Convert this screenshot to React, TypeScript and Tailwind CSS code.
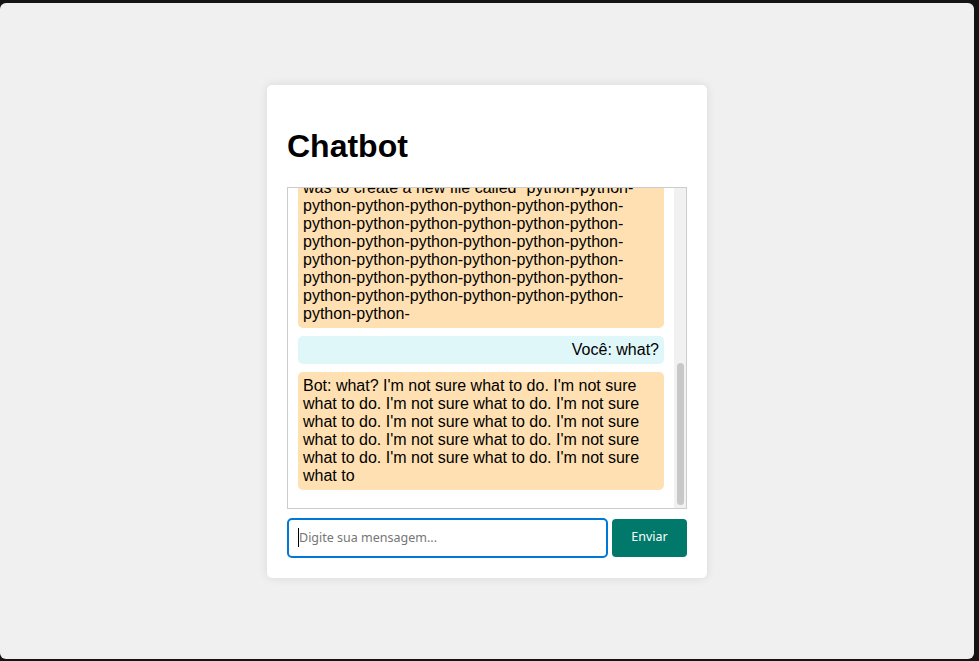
import React, { useEffect, useRef } from 'react';

type Msg = { from: 'user' | 'bot'; text: string };

const python = Array.from({ length: 40 }, () => 'python-').join('');

const messages: Msg[] = [
    { from: 'user', text: 'Você: hi' },
    { from: 'bot', text: 'Bot: hi! How can I help you today?' },
    { from: 'user', text: 'Você: what can you do?' },
    { from: 'bot', text: "Bot: what can you do? I'm a chatbot. I can answer your questions and talk with you about anything you want to talk about. I can help you." },
    { from: 'user', text: 'Você: tell me about python' },
    { from: 'bot', text: "Bot: tell me about python. Python is a programming language. It is used to write programs and scripts. It is easy to learn and easy to use." },
    { from: 'user', text: 'Você: how do I create a file?' },
    { from: 'bot', text: `Bot: how do I create a file? I tried to create a file in python but it didn't work. I don't know why it didn't work. The first thing I did\nwas to create a new file called "${python}` },
    { from: 'user', text: 'Você: what?' },
    { from: 'bot', text: "Bot: what? I'm not sure what to do. I'm not sure what to do. I'm not sure what to do. I'm not sure what to do. I'm not sure what to do. I'm not sure what to do. I'm not sure what to do. I'm not sure what to do. I'm not sure what to do. I'm not sure what to" },
];

const App: React.FC = () => {
    const listRef = useRef<HTMLDivElement>(null);

    useEffect(() => {
        if (listRef.current) listRef.current.scrollTop = listRef.current.scrollHeight;
    }, []);

    return (
        <div className="w-[979px] h-[661px] bg-[#141414] pt-[3px] pr-[5px] pb-[2px]">
            {/* Window */}
            <div className="w-full h-full bg-[#f0f0f0] rounded-[6px] flex items-center justify-center font-['Liberation_Sans',Arial,sans-serif] text-black">
                {/* Card */}
                <div className="w-[440px] bg-white rounded-[5px] p-5 shadow-[0_0_10px_rgba(0,0,0,0.1)]">
                    <h1 className="text-[32px] leading-[37px] font-bold mt-[23px] mb-[22px]">Chatbot</h1>

                    {/* Chat box */}
                    <div className="h-[322px] border border-[#ccc] flex">
                        <div ref={listRef} className="flex-1 overflow-hidden p-[10px]">
                            {messages.map((m, i) => (
                                <div
                                    key={i}
                                    className={
                                        m.from === 'user'
                                            ? 'mb-2 p-[5px] rounded-[5px] bg-[#e0f7fa] text-right text-[16px] leading-[18px] whitespace-pre-line'
                                            : 'mb-2 p-[5px] rounded-[5px] bg-[#ffe0b2] text-left text-[16px] leading-[18px] whitespace-pre-line'
                                    }
                                >
                                    {m.text}
                                </div>
                            ))}
                        </div>
                        {/* Scrollbar */}
                        <div className="w-[12px] bg-[#f1f1f1] flex flex-col justify-end items-center pb-[3px]">
                            <div className="w-[7px] h-[142px] rounded-full bg-[#c8c8c8]" />
                        </div>
                    </div>

                    {/* Input row */}
                    <div className="flex items-center gap-[4px] mt-[9px]">
                        <div className="relative flex-1 flex">
                            <input
                                type="text"
                                placeholder="Digite sua mensagem..."
                                className="flex-1 h-[40px] px-[10px] border-2 border-[#0078d7] rounded-[5px] outline-none text-[12.5px] font-['Noto_Sans',sans-serif] placeholder:text-[#767676]"
                            />
                            {/* caret */}
                            <span className="absolute left-[11px] top-[10px] w-px h-[19px] bg-black" />
                        </div>
                        <button className="w-[75px] h-[38px] bg-[#00796b] text-white rounded-[4px] text-[12.5px] font-['Noto_Sans',sans-serif]">
                            Enviar
                        </button>
                    </div>
                </div>
            </div>
        </div>
    );
};

export default App;
